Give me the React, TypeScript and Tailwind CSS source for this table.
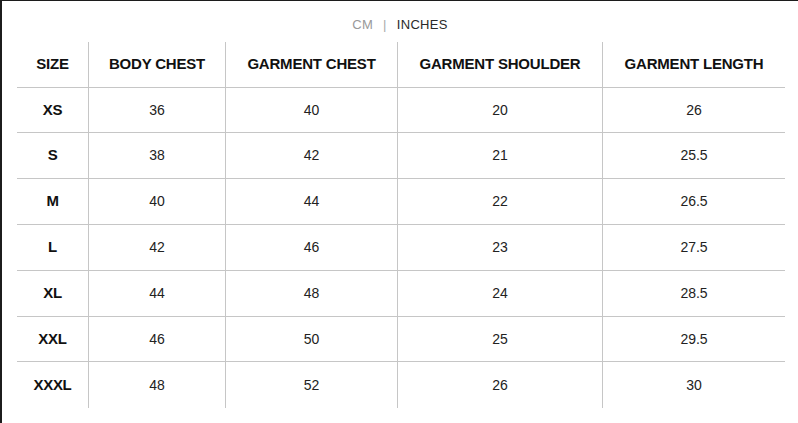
const headers = ['SIZE', 'BODY CHEST', 'GARMENT CHEST', 'GARMENT SHOULDER', 'GARMENT LENGTH'];

const rows: [string, string, string, string, string][] = [
  ['XS', '36', '40', '20', '26'],
  ['S', '38', '42', '21', '25.5'],
  ['M', '40', '44', '22', '26.5'],
  ['L', '42', '46', '23', '27.5'],
  ['XL', '44', '48', '24', '28.5'],
  ['XXL', '46', '50', '25', '29.5'],
  ['XXXL', '48', '52', '26', '30'],
];

const widths = ['w-[72px]', 'w-[137px]', 'w-[172px]', 'w-[205px]', 'w-[182px]'];
const rowHeights = ['h-[45px]', 'h-[46px]', 'h-[46px]', 'h-[46px]', 'h-[46px]', 'h-[45px]', 'h-[46px]'];

export default function App() {
  return (
    <div
      className="w-[798px] h-[423px] bg-white border-t border-l-2 border-[#1c1c1c] overflow-hidden"
      style={{ fontFamily: '"Liberation Sans", Arial, sans-serif' }}
    >
      <div className="h-[41px] flex items-center justify-center pt-[5px] text-[13px] leading-none tracking-[0.3px]">
        <span className="text-[#999999]">CM</span>
        <span className="mx-[10px] text-[#aaaaaa]">|</span>
        <span className="text-[#2a2a2a]">INCHES</span>
      </div>

      <div className="ml-[15px] w-[768px]">
        <div className="flex h-[46px] border-b border-[#c6c6c6]">
          {headers.map((h, i) => (
            <div
              key={h}
              className={`${widths[i]} flex items-center justify-center text-[15px] font-bold text-[#111111] tracking-[-0.2px] ${
                i < headers.length - 1 ? 'border-r border-[#c6c6c6]' : ''
              }`}
            >
              {h}
            </div>
          ))}
        </div>

        {rows.map((row, r) => (
          <div
            key={row[0]}
            className={`flex ${rowHeights[r]} ${r < rows.length - 1 ? 'border-b border-[#c6c6c6]' : ''}`}
          >
            {row.map((cell, i) => (
              <div
                key={i}
                className={`${widths[i]} flex items-center justify-center ${
                  i === 0 ? 'text-[15px] font-bold text-[#111111] tracking-[-0.3px]' : 'text-[14px] text-[#222222]'
                } ${i < row.length - 1 ? 'border-r border-[#c6c6c6]' : ''}`}
              >
                {cell}
              </div>
            ))}
          </div>
        ))}
      </div>
    </div>
  );
}
